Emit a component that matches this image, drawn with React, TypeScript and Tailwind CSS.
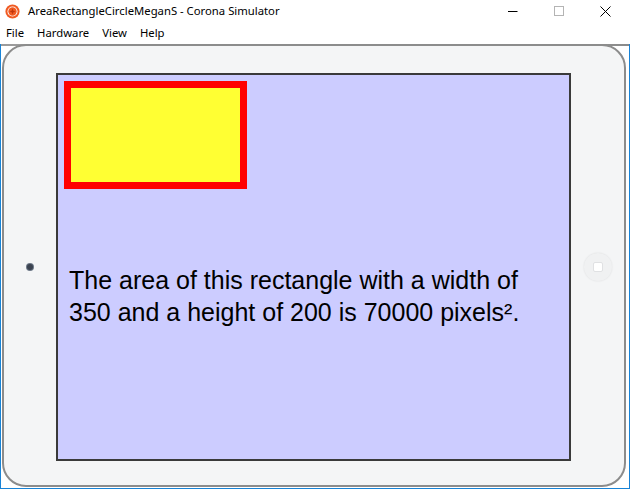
// Corona simulator window showing an iPad skin with a rectangle demo
const MENU = ["File", "Hardware", "View", "Help"];

function CoronaIcon() {
  return (
    <svg width="15" height="15" viewBox="0 0 14 14" className="shrink-0">
      <circle cx="7" cy="7" r="6.6" fill="#f05a22" />
      <circle cx="7" cy="7" r="4.7" fill="#ffffff" />
      <circle cx="7" cy="7" r="3.9" fill="#f05a22" />
      <path d="M7 4.2 L7.8 6.2 L9.8 7 L7.8 7.8 L7 9.8 L6.2 7.8 L4.2 7 L6.2 6.2 Z" fill="#c0360c" />
    </svg>
  );
}

export default function App() {
  return (
    <div className="w-[630px] h-[489px] bg-white flex flex-col overflow-hidden font-['Noto_Sans',sans-serif] text-black">
      {/* title bar */}
      <div className="h-[22px] flex items-center pl-[5px] shrink-0">
        <CoronaIcon />
        <span className="ml-[8px] text-[11.3px] leading-none">AreaRectangleCircleMeganS - Corona Simulator</span>
        <div className="ml-auto mr-[2px] flex items-center h-full">
          <div className="w-[46px] flex justify-center">
            <svg width="10" height="10" viewBox="0 0 10 10">
              <path d="M0 5.5 H9.5" stroke="#000" strokeWidth="1" />
            </svg>
          </div>
          <div className="w-[46px] flex justify-center">
            <svg width="10" height="10" viewBox="0 0 10 10">
              <rect x="0.5" y="0.5" width="9" height="9" fill="none" stroke="#b4b4b4" strokeWidth="1" />
            </svg>
          </div>
          <div className="w-[46px] flex justify-center">
            <svg width="11" height="11" viewBox="0 0 11 11">
              <path d="M0.5 0.5 L10.5 10.5 M10.5 0.5 L0.5 10.5" stroke="#000" strokeWidth="1" />
            </svg>
          </div>
        </div>
      </div>

      {/* menu bar */}
      <div className="h-[22px] flex items-center gap-[13px] pl-[6px] text-[11.3px] shrink-0">
        {MENU.map((m) => (
          <span key={m}>{m}</span>
        ))}
      </div>

      {/* simulator area */}
      <div className="flex-1 relative border-x border-b border-[#1883d7] bg-white">
        <div className="absolute left-0 right-0 top-0 h-[2px] bg-gradient-to-r from-[#9a9a9a] via-[#c8c8c8] to-[#8a8a8a]" />
        <div className="ml-px w-[624px] h-[443px] rounded-[24px] border-2 border-[#8c8c8c] bg-[#f4f5f6] flex items-center pt-[27px] pb-[24px] relative">
          {/* camera dot */}
          <div className="w-[52px] flex justify-center">
            <div className="w-[6px] h-[6px] rounded-full bg-[#3b4350] ring-1 ring-[#6a7585]" />
          </div>

          {/* screen */}
          <div className="w-[515px] h-[388px] border-2 border-[#3a3a3a] bg-[#ccccff] px-[6px] pt-[6px] shrink-0">
            <div className="w-[183px] h-[108px] border-[7px] border-[#ff0000] bg-[#ffff33]" />
            <p className="mt-[75px] ml-[5px] font-['Liberation_Sans',Arial,sans-serif] text-[25px] leading-[32px] text-black whitespace-nowrap">
              The area of this rectangle with a width of
              <br />
              350 and a height of 200 is 70000 pixels².
            </p>
          </div>

          {/* home button */}
          <div className="flex-1 flex justify-center">
            <div className="w-[28px] h-[28px] rounded-full bg-[#f0f1f2] shadow-[0_0_2px_rgba(0,0,0,0.1)] flex items-center justify-center">
              <div className="w-[10px] h-[10px] rounded-[2px] border border-[#e0e1e3] bg-white" />
            </div>
          </div>
        </div>
      </div>
    </div>
  );
}
